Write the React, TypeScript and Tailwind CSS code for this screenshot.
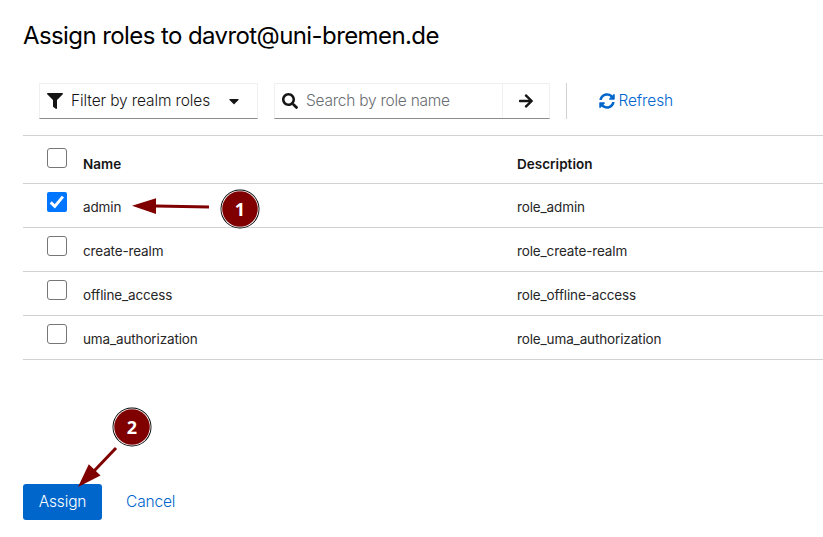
import { FaFilter, FaCaretDown, FaSearch, FaArrowRight, FaSyncAlt } from "react-icons/fa";

type Role = { name: string; description: string; checked?: boolean };

const roles: Role[] = [
  { name: "admin", description: "role_admin", checked: true },
  { name: "create-realm", description: "role_create-realm" },
  { name: "offline_access", description: "role_offline-access" },
  { name: "uma_authorization", description: "role_uma_authorization" },
];

function Checkbox({ checked = false }: { checked?: boolean }) {
  return checked ? (
    <span className="flex size-5 items-center justify-center rounded-[2px] bg-[#0075ff]">
      <svg viewBox="0 0 20 20" className="size-5" fill="none" stroke="white" strokeWidth="3">
        <path d="M3.7 10.4 L7.8 14.4 L15.9 4.6" />
      </svg>
    </span>
  ) : (
    <span className="block size-5 rounded-[3px] border border-[#767676] bg-white" />
  );
}

function Marker({ label, className }: { label: string; className: string }) {
  return (
    <span className={`absolute size-10 ${className}`}>
      <svg viewBox="0 0 40 40" className="absolute inset-0 size-10">
        <circle cx="20" cy="20" r="19.5" fill="black" />
        <circle cx="20" cy="20" r="18.6" fill="white" />
        <circle cx="20" cy="20" r="17.8" fill="#800000" />
      </svg>
      <span className="relative flex size-full items-center justify-center font-['Noto_Sans',sans-serif] text-[18px] leading-none font-bold text-white">
        {label}
      </span>
    </span>
  );
}

export default function App() {
  return (
    <main className="relative h-[537px] w-[823px] overflow-hidden bg-white pl-[23px] font-['Inter',sans-serif] text-[#151515]">
      <h1 className="pt-5 text-[24px] leading-8 tracking-[-0.59px] whitespace-nowrap text-black">
        Assign roles to davrot@uni-bremen.de
      </h1>

      <div className="mt-[31px] flex h-9 items-center pl-4 text-[15.5px]">
        <button className="flex h-9 w-[219px] items-center border border-[#f0f0f0] border-b-[#8a8d90] pl-[7px]">
          <FaFilter className="size-4" />
          <span className="ml-2 w-[155px] text-left font-light tracking-[-0.12px] whitespace-nowrap">Filter by realm roles</span>
          <FaCaretDown className="size-4" />
        </button>
        <div className="ml-4 flex h-9 w-[276px] border border-[#f0f0f0] border-b-[#8a8d90]">
          <div className="flex w-[228px] items-center border-r border-[#f0f0f0] pl-[7px]">
            <FaSearch className="size-4" />
            <span className="ml-2 font-light tracking-[-0.25px] whitespace-nowrap text-[#6a6e73]">Search by role name</span>
          </div>
          <button className="flex flex-1 items-center justify-center">
            <FaArrowRight className="size-4" />
          </button>
        </div>
        <div className="ml-4 h-9 w-px bg-[#d2d2d2]" />
        <button className="ml-8 flex items-center gap-[3.5px] text-[#0066cc]">
          <FaSyncAlt className="size-4" />
          <span className="font-light tracking-[-0.12px]">Refresh</span>
        </button>
      </div>

      <div className="mt-4 border-t border-[#d2d2d2] text-[14px] leading-[21px]">
        <div className="flex h-12 border-b border-[#d2d2d2] pl-6 font-semibold">
          <div className="w-9 pt-3"><Checkbox /></div>
          <div className="w-[434px] pt-[18px] text-[13.5px] tracking-[0.05px]">Name</div>
          <div className="pt-[18px] text-[13.5px] tracking-[0.02px]">Description</div>
        </div>
        {roles.map((role) => (
          <div key={role.name} className="flex h-11 border-b border-[#d2d2d2] pl-6 text-[13.5px] text-[#262626]">
            <div className="w-9 pt-2"><Checkbox checked={role.checked} /></div>
            <div className="w-[434px] pt-[13px] tracking-[-0.14px]">{role.name}</div>
            <div className="pt-[13px] tracking-[-0.13px]">{role.description}</div>
          </div>
        ))}
      </div>

      <div className="mt-[124px] flex h-9 text-[15.5px] font-light">
        <button className="w-[79px] rounded-[3px] bg-[#0066cc] tracking-[-0.15px] text-white">Assign</button>
        <button className="ml-6 tracking-[-0.15px] text-[#0066cc]">Cancel</button>
      </div>

      <svg className="pointer-events-none absolute inset-0" width="823" height="537" fill="#800000">
        <path d="M209 207 L156 206" stroke="#800000" strokeWidth="3" />
        <path d="M132 205.7 L156 198.2 V214 Z" />
        <path d="M116 448 L94 471" stroke="#800000" strokeWidth="3" />
        <path d="M78 487 L88.8 464.3 L100.5 475.4 Z" />
      </svg>
      <Marker label="1" className="top-[189px] left-[220px]" />
      <Marker label="2" className="top-[407px] left-[112px]" />
    </main>
  );
}
